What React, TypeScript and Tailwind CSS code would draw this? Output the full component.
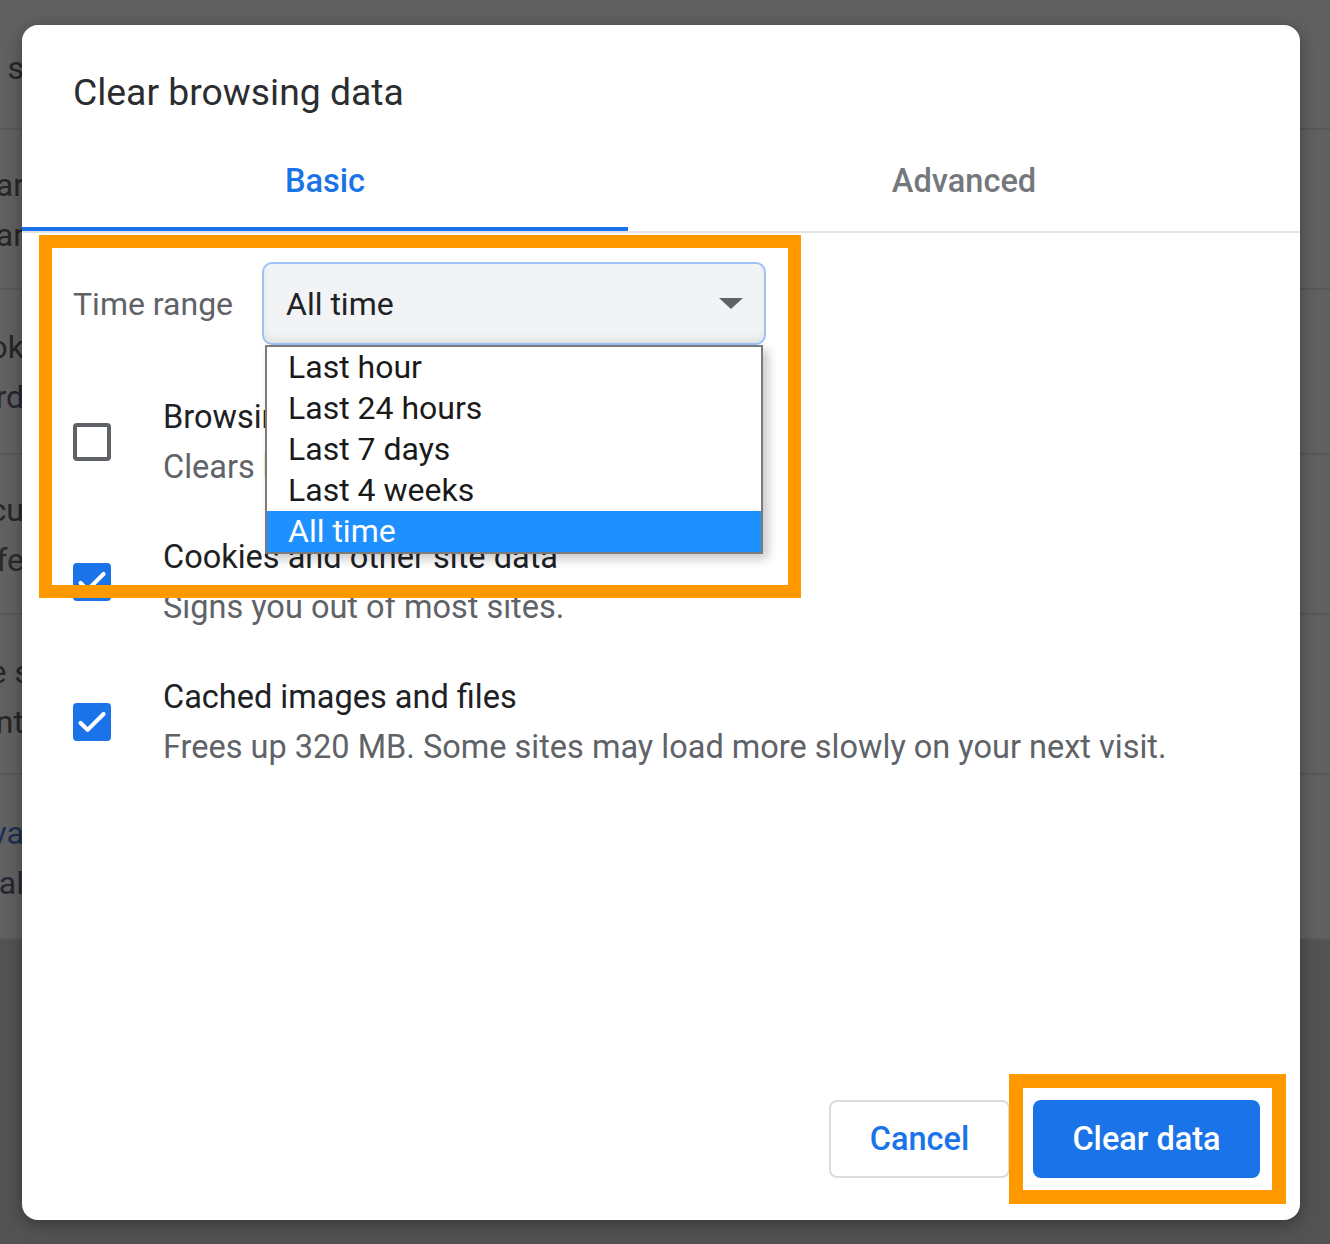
import React from "react";

const bgRows: { h: string; pt: string; lines: { t: string; c: string; w?: string }[] }[] = [
  { h: "h-[130px]", pt: "pt-[43px]", lines: [{ t: "s", c: "text-[#262626]" }] },
  { h: "h-[160px]", pt: "pt-[30px]", lines: [{ t: "Clear", c: "text-[#262626]" }, { t: "Clear", c: "text-[#262626]" }] },
  { h: "h-[165px]", pt: "pt-[32px]", lines: [{ t: "Cook", c: "text-[#262626]" }, { t: "Passwords and third", c: "text-[#2a2433]" }] },
  { h: "h-[160px]", pt: "pt-[30px]", lines: [{ t: "Secu", c: "text-[#262626]" }, { t: "Safe", c: "text-[#2a2a2a]" }] },
  { h: "h-[160px]", pt: "pt-[32px]", lines: [{ t: "Site se", c: "text-[#262626]", w: "w-[48px]" }, { t: "Cont", c: "text-[#262626]" }] },
  { h: "h-[165px]", pt: "pt-[33px]", lines: [{ t: "Priva", c: "text-[#1a2f55]" }, { t: "Trial", c: "text-[#2a2433]" }] },
];

function CheckBox({ checked }: { checked: boolean }) {
  if (!checked) {
    return <div className="w-[38px] h-[38px] shrink-0 rounded-[4px] border-[4px] border-[#5f6368] bg-white" />;
  }
  return (
    <div className="w-[38px] h-[38px] shrink-0 rounded-[4px] bg-[#1a73e8] flex items-center justify-center">
      <svg width="38" height="38" viewBox="0 0 24 24" fill="none">
        <path d="M4.8 12.6 L9.2 17 L19.3 6.9" stroke="white" strokeWidth="2.6" strokeLinecap="round" strokeLinejoin="round" />
      </svg>
    </div>
  );
}

function Option({ label, sub, checked }: { label: string; sub: string; checked: boolean }) {
  return (
    <div className="flex items-center pl-[51px]">
      <CheckBox checked={checked} />
      <div className="ml-[52px] flex flex-col">
        <div className="text-[32.5px] leading-[50px] text-[#202124] whitespace-nowrap">{label}</div>
        <div className="text-[32.5px] leading-[50px] text-[#5f6368] whitespace-nowrap">{sub}</div>
      </div>
    </div>
  );
}

export default function App() {
  const items = ["Last hour", "Last 24 hours", "Last 7 days", "Last 4 weeks", "All time"];
  return (
    <div className="relative w-[1330px] h-[1244px] overflow-hidden bg-[#616161] font-[Roboto,Arial,sans-serif]">
      {/* underlying page behind scrim */}
      <div className="flex flex-col h-full">
        {bgRows.map((r, i) => (
          <div key={i} className={`${r.h} shrink-0 border-b-2 border-[#585858] ${r.pt} flex flex-col`}>
            {r.lines.map((l, j) => (
              <div key={j} className={`${l.w ?? "w-[24px]"} overflow-hidden flex justify-end`}>
                <span className={`whitespace-nowrap shrink-0 text-[32px] leading-[50px] ${l.c}`}>{l.t}</span>
              </div>
            ))}
          </div>
        ))}
        <div className="flex-1 bg-[#535353]" />
      </div>

      {/* dialog */}
      <div className="absolute left-[22px] top-[25px] w-[1278px] h-[1195px] bg-white rounded-[16px] shadow-[0_4px_18px_rgba(0,0,0,0.35)] flex flex-col">
        <div className="pl-[51px] pt-[45px] text-[37.3px] leading-[44px] text-[#2b2d30]">Clear browsing data</div>

        <div className="mt-[22px] flex border-b-2 border-[#e4e4e4]">
          <div className="w-[606px] h-[95px] flex items-center justify-center border-b-4 border-[#1a73e8] text-[32.6px] font-medium text-[#1a73e8]">
            Basic
          </div>
          <div className="flex-1 h-[95px] flex items-center justify-center border-b-4 border-transparent text-[32.6px] font-medium text-[#74787d]">
            Advanced
          </div>
        </div>

        <div className="mt-[29px] flex items-center pl-[51px]">
          <div className="w-[189px] text-[32px] text-[#5f6368]">Time range</div>
          <div className="relative w-[504px] h-[83px]">
            <div className="h-full rounded-[10px] border-2 border-[#9cc2f7] bg-[#f1f3f4] shadow-[inset_0_-5px_6px_rgba(0,0,0,0.06)] flex items-center justify-between pl-[22px] pr-[21px]">
              <span className="text-[32px] text-[#202124]">All time</span>
              <svg width="24" height="11" viewBox="0 0 24 11">
                <path d="M0 0 L24 0 L12 11 Z" fill="#5f6368" />
              </svg>
            </div>
            <div className="absolute top-[83px] left-[3px] w-[498px] bg-white border-2 border-[#7b7b7b] shadow-[5px_5px_10px_rgba(0,0,0,0.22)] z-10 flex flex-col">
              {items.map((it) => (
                <div
                  key={it}
                  className={`h-[41px] pl-[21px] text-[32px] leading-[41px] ${
                    it === "All time" ? "bg-[#1e90ff] text-white" : "text-[#1a1a1a]"
                  }`}
                >
                  {it}
                </div>
              ))}
            </div>
          </div>
        </div>

        <div className="mt-[47px] flex flex-col gap-[40px]">
          <Option checked={false} label="Browsing history" sub="Clears history from all synced devices" />
          <Option checked={true} label="Cookies and other site data" sub="Signs you out of most sites." />
          <Option
            checked={true}
            label="Cached images and files"
            sub="Frees up 320 MB. Some sites may load more slowly on your next visit."
          />
        </div>

        <div className="mt-auto flex justify-end gap-[23px] pr-[40px] pb-[42px]">
          <button className="w-[181px] h-[78px] rounded-[8px] border-2 border-[#dadce0] bg-white text-[32.5px] font-medium text-[#1a73e8]">
            Cancel
          </button>
          <button className="w-[227px] h-[78px] rounded-[8px] bg-[#1a73e8] text-[32.5px] font-medium text-white">
            Clear data
          </button>
        </div>
      </div>

      {/* annotation highlights */}
      <div className="absolute left-[39px] top-[235px] w-[762px] h-[363px] border-[13px] border-[#ff9900] z-20" />
      <div className="absolute left-[1009px] top-[1074px] w-[277px] h-[130px] border-[14px] border-[#ff9900] z-20" />
    </div>
  );
}
